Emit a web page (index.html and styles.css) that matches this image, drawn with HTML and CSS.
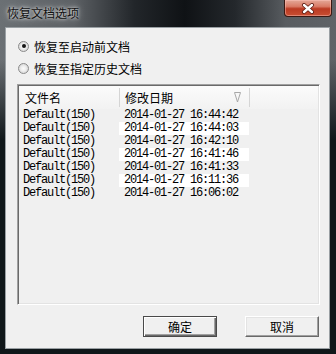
FILE: index.html
```html
<!DOCTYPE html>
<html>
<head>
    <title>恢复文档选项</title>
    <meta charset="UTF-8">
    <link rel="stylesheet" href="styles.css">
</head>
<body>
    <div class="window">
        <!-- Barre de titre -->
        <div class="titlebar">
            <span class="title">恢复文档选项</span>
            <div class="close">
                <svg width="14" height="11" viewBox="0 0 14 11">
                    <path d="M3 2 L11 9 M11 2 L3 9" stroke="#5a1a10" stroke-width="4" stroke-linecap="round"/>
                    <path d="M3 2 L11 9 M11 2 L3 9" stroke="#ffffff" stroke-width="2.4" stroke-linecap="round"/>
                </svg>
            </div>
        </div>

        <div class="client">
            <label class="radio-row"><span class="radio checked"></span>恢复至启动前文档</label>
            <label class="radio-row"><span class="radio"></span>恢复至指定历史文档</label>

            <!-- Liste des documents -->
            <div class="list">
                <div class="list-head">
                    <div class="head-name">文件名</div>
                    <div class="head-date">修改日期
                        <svg class="sort" width="7" height="11" viewBox="0 0 7 11">
                            <path d="M0.5 0.5 H6.5 L3.5 10 Z" fill="none" stroke="#a8a8a8" stroke-width="1"/>
                        </svg>
                    </div>
                    <div class="head-rest"></div>
                </div>
                <div class="list-body">
                    <div class="row"><span class="cell-name">Default(150)</span><span class="cell-date">2014-01-27 16:44:42</span></div>
                    <div class="row alt"><span class="cell-name">Default(150)</span><span class="cell-date">2014-01-27 16:44:03</span></div>
                    <div class="row"><span class="cell-name">Default(150)</span><span class="cell-date">2014-01-27 16:42:10</span></div>
                    <div class="row alt"><span class="cell-name">Default(150)</span><span class="cell-date">2014-01-27 16:41:46</span></div>
                    <div class="row"><span class="cell-name">Default(150)</span><span class="cell-date">2014-01-27 16:41:33</span></div>
                    <div class="row alt"><span class="cell-name">Default(150)</span><span class="cell-date">2014-01-27 16:11:36</span></div>
                    <div class="row"><span class="cell-name">Default(150)</span><span class="cell-date">2014-01-27 16:06:02</span></div>
                </div>
            </div>

            <div class="buttons">
                <button class="btn default">确定</button>
                <button class="btn">取消</button>
            </div>
        </div>
    </div>
</body>
</html>
```

FILE: styles.css
```css
body {
    margin: 0;
    font-family: "Noto Sans CJK SC", "Liberation Sans", sans-serif;
    font-size: 12px;
    color: #000;
}
.window {
    width: 336px;
    height: 354px;
    box-sizing: border-box;
    background: linear-gradient(to bottom, rgba(0,0,0,0) 0, rgba(0,0,0,0) 60px, #10171a 140px),
                linear-gradient(to right, #6b7074 0%, #5d6165 22%, #22262a 40%, #0f1215 55%, #24282c 70%, #585c60 85%, #5f6367 100%);
}
.titlebar {
    height: 27px;
    display: flex;
    align-items: flex-start;
}
.title {
    margin: 4px 0 0 7px;
    font-size: 12px;
    line-height: 17px;
    color: #111;
    text-shadow: 0 0 6px #cfd2d4, 0 0 3px #e8e8e8;
}
.close {
    margin-left: auto;
    margin-right: 4px;
    width: 48px;
    height: 17px;
    box-sizing: border-box;
    border: 1px solid #3a1812;
    border-top: none;
    border-radius: 0 0 4px 4px;
    background: linear-gradient(to bottom, #e4a898 0%, #d97b66 40%, #bb3a22 55%, #c94f33 100%);
    box-shadow: inset 0 0 0 1px rgba(255,200,190,0.45);
    display: flex;
    align-items: center;
    justify-content: center;
}
.client {
    margin: 0 6px 0 5px;
    height: 322px;
    box-sizing: border-box;
    border: 1px solid #9aa0a4;
    background-color: #f0f0f0;
    padding: 7px 9px 0 11px;
    display: flex;
    flex-direction: column;
}
.radio-row {
    height: 22px;
    display: flex;
    align-items: center;
    gap: 5px;
    padding-left: 1px;
}
.radio {
    width: 11px;
    height: 11px;
    box-sizing: border-box;
    border: 1px solid #8b8b8b;
    border-radius: 50%;
    background: radial-gradient(circle, #fbfbfb 0, #f0f0f0 35%, #c9c9c9 100%);
    display: flex;
    align-items: center;
    justify-content: center;
}
.radio.checked::after {
    content: "";
    width: 4px;
    height: 4px;
    border-radius: 50%;
    background-color: #141414;
}
.list {
    margin-top: 5px;
    height: 221px;
    box-sizing: border-box;
    border: 1px solid;
    border-color: #a0a0a0 #ffffff #ffffff #a0a0a0;
    box-shadow: inset 1px 1px #6a6a6a, inset -1px -1px #e3e3e3;
    padding: 1px;
    background-color: #f0f0f0;
}
.list-head {
    height: 23px;
    display: flex;
    background: linear-gradient(to bottom, #fbfbfb, #f2f2f2);
}
.head-name, .head-date {
    box-sizing: border-box;
    border-right: 1px solid #d5d5d5;
    display: flex;
    align-items: center;
    margin: 2px 0;
}
.head-name {
    width: 101px;
    padding-left: 6px;
}
.head-date {
    width: 130px;
    padding-left: 5px;
    padding-right: 8px;
}
.sort {
    margin-left: auto;
}
.head-rest {
    flex: 1;
}
.row {
    height: 13px;
    display: flex;
    font-family: "Liberation Mono", monospace;
    font-size: 12px;
    letter-spacing: -1.2px;
    line-height: 13px;
}
.cell-name {
    width: 100px;
    box-sizing: border-box;
    padding-left: 4px;
}
.cell-date {
    width: 130px;
    box-sizing: border-box;
    padding-left: 5px;
}
.row.alt .cell-date {
    background-color: #ffffff;
}
.buttons {
    margin-top: 11px;
    display: flex;
    justify-content: flex-end;
    gap: 28px;
    padding-right: 1px;
}
.btn {
    width: 74px;
    height: 21px;
    box-sizing: border-box;
    font-family: "Noto Sans CJK SC", sans-serif;
    font-size: 12px;
    line-height: 17px;
    padding: 0;
    background-color: #f0f0f0;
    border: 1px solid;
    border-color: #ffffff #696969 #696969 #ffffff;
    box-shadow: inset -1px -1px #a0a0a0, inset 1px 1px #e3e3e3;
    color: #000;
}
.btn.default {
    border: 1px solid #4a4a4a;
    box-shadow: inset 1px 1px #ffffff, inset -1px -1px #696969, inset -2px -2px #a0a0a0;
}
```
